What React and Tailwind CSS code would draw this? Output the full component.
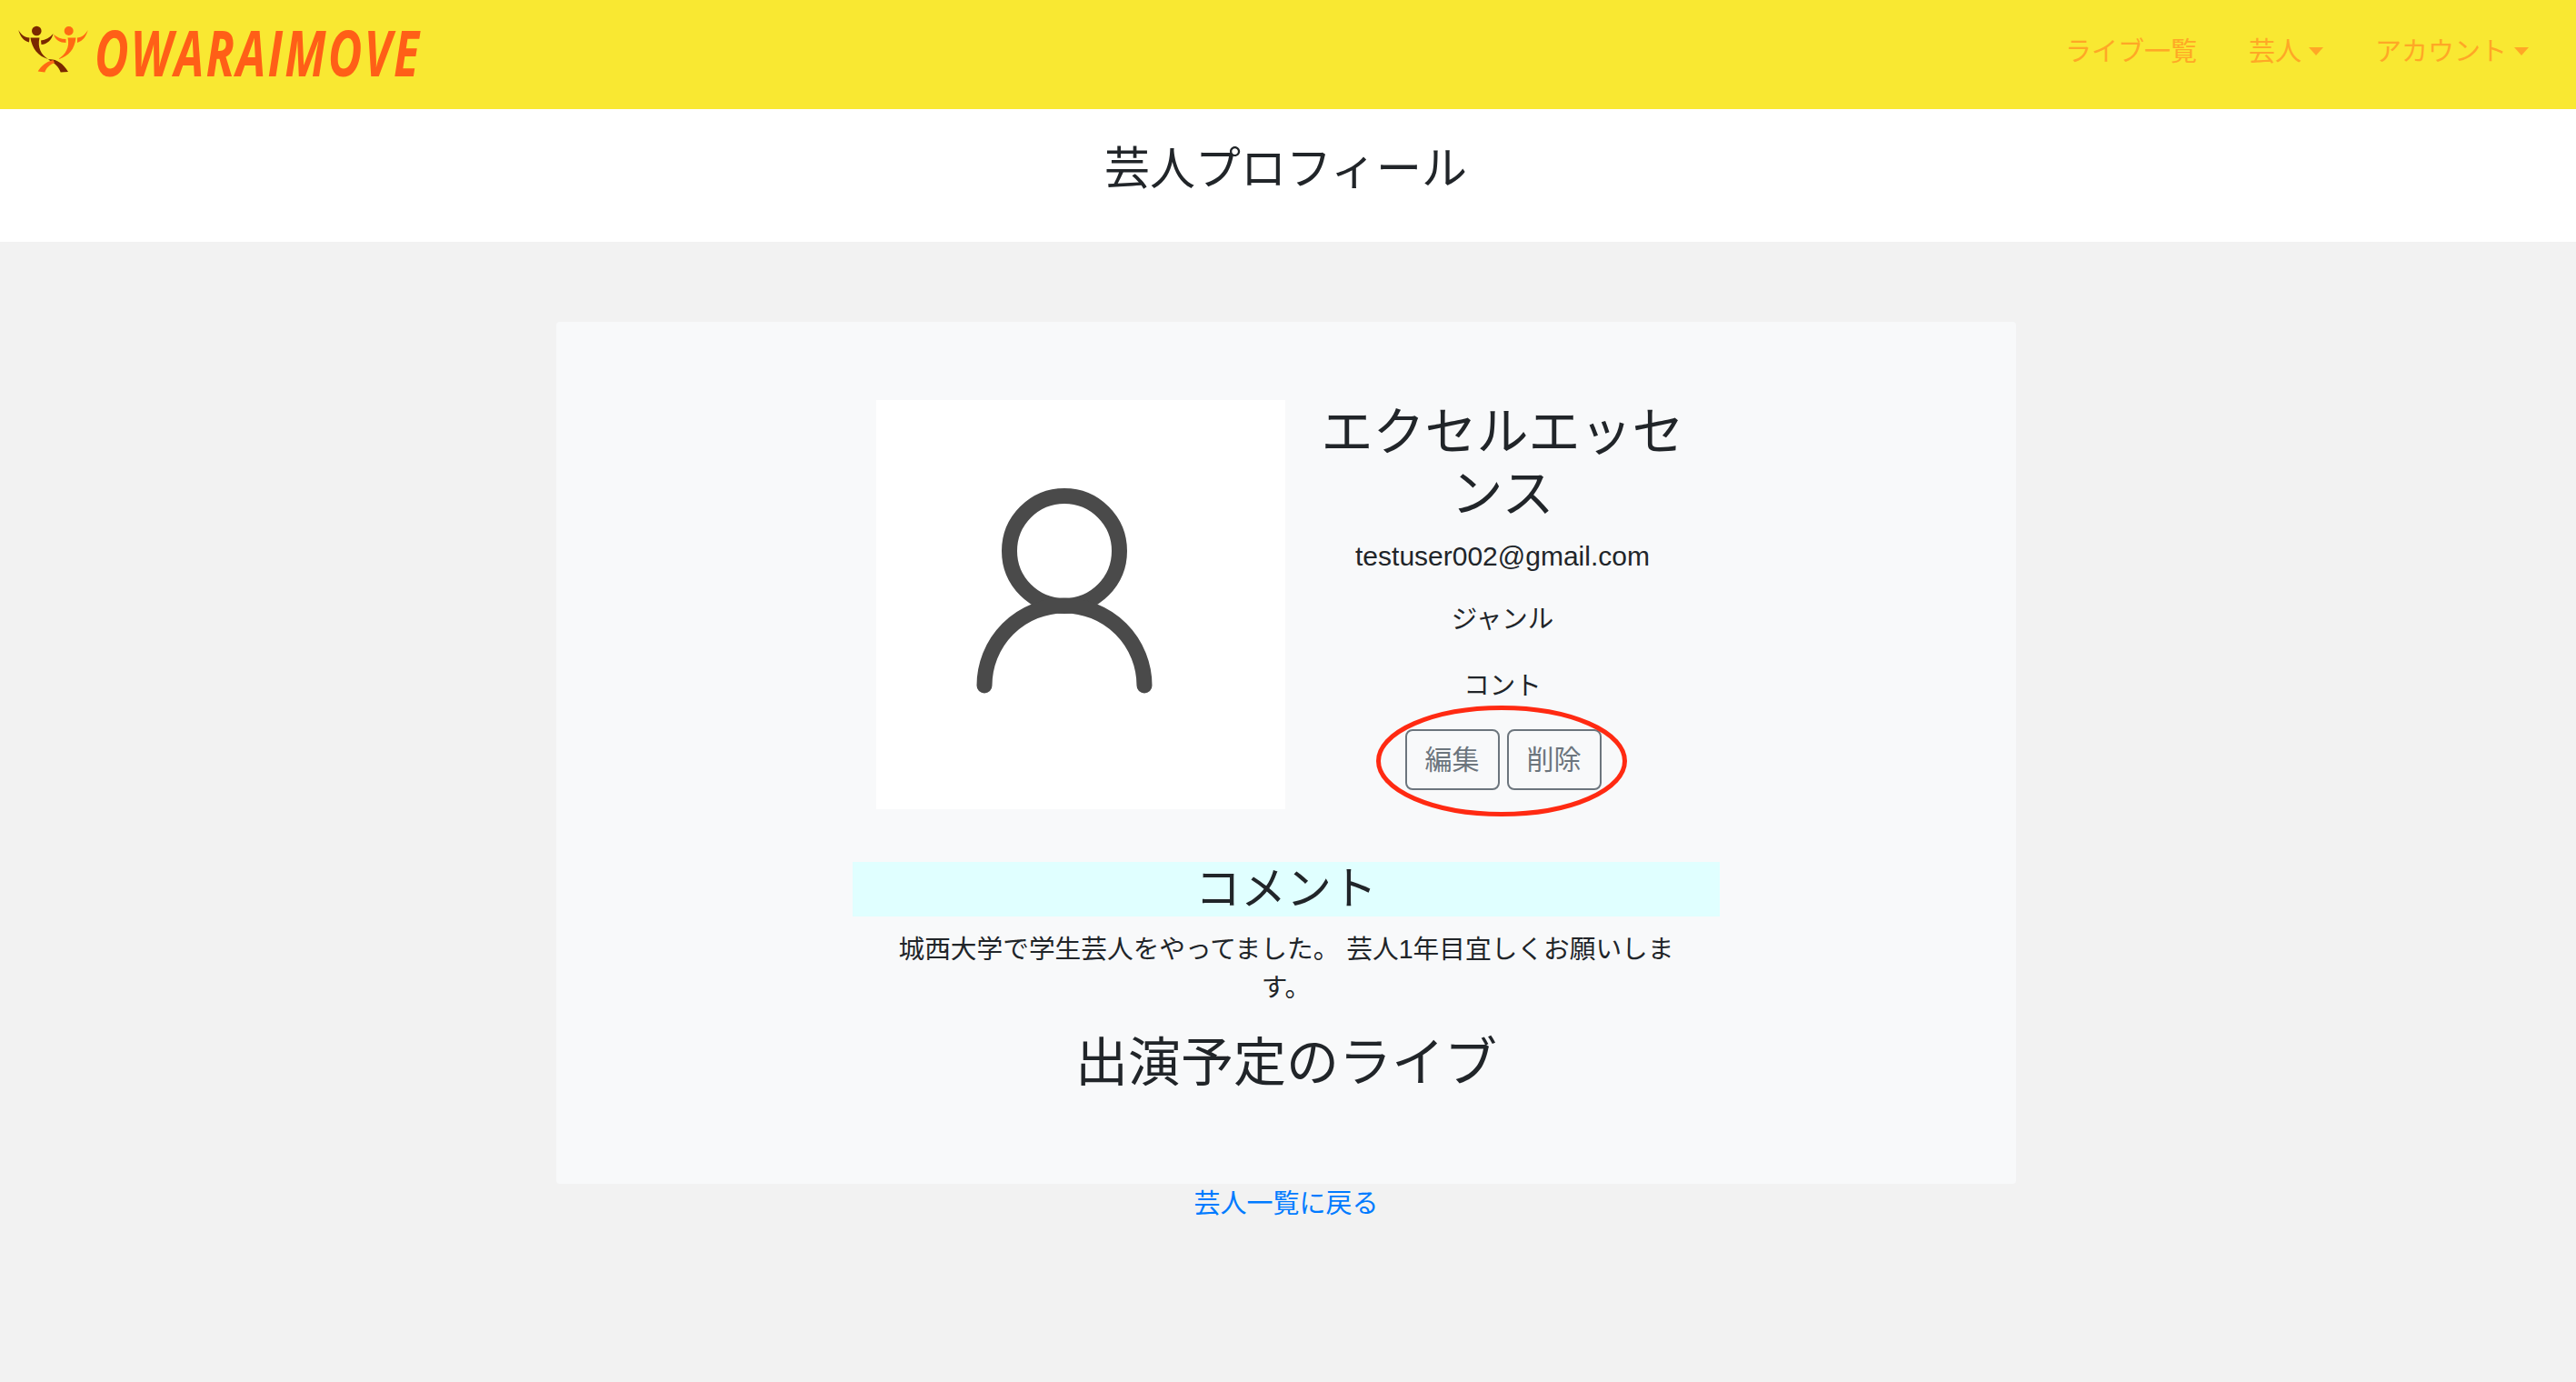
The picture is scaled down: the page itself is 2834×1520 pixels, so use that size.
import { useState } from 'react'

const LogoMark = () => (
  <svg width="78" height="58" viewBox="20 30 78 58" className="shrink-0">
    <g fill="#7a2800">
      <circle cx="40.3" cy="36" r="5.3" />
      <path d="M20.3 35C23 40 27 43 32.5 43.5L32 48.5C26 47 22 42 20.3 35Z" />
      <path d="M45 46.5C50 46 55 43.5 58.5 39C57 46 52 50.5 45.5 51Z" />
      <path d="M33.5 43.5L43.5 43.5C41 54 45 62 53 67C42 64 35 55 33.5 43.5Z" />
      <path d="M53 67.5C61 66.5 69 71 75 81L66.7 81.5C65 76 60 71 53 67.5Z" />
    </g>
    <g fill="#ff6a13">
      <circle cx="75.7" cy="36" r="5" />
      <path d="M59 40C63 43 67 45 72.5 45L72.5 49C66 49 61 46 59 40Z" />
      <path d="M96.7 35C94 40 90 43 85 43.5L85 49C91 47 95 42 96.7 35Z" />
      <path d="M74.5 43.5L83.5 43.5C82 56 76 64 64 67C72 62 77 54 74.5 43.5Z" />
      <path d="M58.5 68C50 70 45 75 41.7 80.5L49.3 81.5C51 77 54 73.5 60 71Z" />
    </g>
  </svg>
)

const NavItem = ({ label, caret }) => (
  <a className="flex items-center text-[#ffa726] cursor-pointer">
    {label}
    {caret && <span className="ml-[8px] mt-[-3px] w-0 h-0 border-x-[8px] border-x-transparent border-t-[9px] border-t-[#ffa726]" />}
  </a>
)

const Avatar = () => (
  <svg width="450" height="450" viewBox="0 0 450 450" className="shrink-0 bg-white">
    <circle cx="207" cy="166" r="60.5" fill="none" stroke="#4a4a4a" strokeWidth="17" />
    <path d="M119 314A88 88 0 0 1 295 314" fill="none" stroke="#4a4a4a" strokeWidth="17" strokeLinecap="round" />
  </svg>
)

const OutlineButton = ({ children }) => (
  <button className="w-[104px] h-[67px] border-2 border-[#6c757d] rounded-[8px] text-[#6c757d] text-[30px] leading-none">
    {children}
  </button>
)

export default function App() {
  const [comment] = useState('城西大学で学生芸人をやってました。 芸人1年目宜しくお願いします。')

  return (
    <div className="min-h-[1520px] bg-[#f2f2f2] text-[#212529] text-[30px] font-['Liberation_Sans','Noto_Sans_CJK_JP',sans-serif]">
      <header className="h-[120px] bg-[#f9e832] flex items-center justify-between pl-[20px] pr-[52px]">
        <div className="flex items-center gap-[6px] mt-[-6px]">
          <LogoMark />
          <span className="font-['Open_Sans',sans-serif] font-bold italic text-[#ff5f17] text-[70px] leading-none tracking-[3px] origin-left scale-x-[0.735] w-[356px]">OWARAIMOVE</span>
        </div>
        <nav className="flex items-center gap-[57px] text-[29px] mt-[-5px]">
          <NavItem label="ライブ一覧" />
          <NavItem label="芸人" caret />
          <NavItem label="アカウント" caret />
        </nav>
      </header>

      <div className="h-[146px] bg-white flex justify-center pr-[5px]">
        <h1 className="text-[50px] leading-[58px] mt-[37px]">芸人プロフィール</h1>
      </div>

      <main className="pt-[88px] flex flex-col items-center pr-[4px]">
        <section className="w-[1606px] h-[948px] bg-[#f8f9fa] rounded-[4px] pt-[86px] flex flex-col items-center">
          <div className="w-[954px] pl-[26px] flex">
            <Avatar />
            <div className="w-[478px] px-[30px] pt-[1px] flex flex-col items-center text-center">
              <h2 className="text-[57px] leading-[68px] font-normal">エクセルエッセンス</h2>
              <p className="mt-[17px] leading-[36px]">testuser002@gmail.com</p>
              <p className="mt-[33px] leading-[36px] text-[28.5px]">ジャンル</p>
              <p className="mt-[37px] leading-[36px] text-[28.5px]">コント</p>
              <div className="relative mt-[30px] ml-[1px] flex gap-[8px]">
                <OutlineButton>編集</OutlineButton>
                <OutlineButton>削除</OutlineButton>
                <svg width="276" height="124" viewBox="0 0 276 124" className="absolute left-[-32px] top-[-28px] pointer-events-none">
                  <ellipse cx="138" cy="63" rx="135.5" ry="58.5" fill="none" stroke="#ff2a12" strokeWidth="5" />
                </svg>
              </div>
            </div>
          </div>

          <div className="w-[954px] mt-[58px] text-center">
            <h3 className="h-[60px] bg-[#e0ffff] text-[50px] leading-[60px]">コメント</h3>
            <p className="mt-[15px] px-[40px] text-[28.7px] leading-[42px]">{comment}</p>
            <h2 className="mt-[28px] text-[58px] leading-[68px]">出演予定のライブ</h2>
          </div>
        </section>
        <a className="mt-[5px] text-[#007bff] text-[29px] leading-[34px] cursor-pointer">芸人一覧に戻る</a>
      </main>
    </div>
  )
}
